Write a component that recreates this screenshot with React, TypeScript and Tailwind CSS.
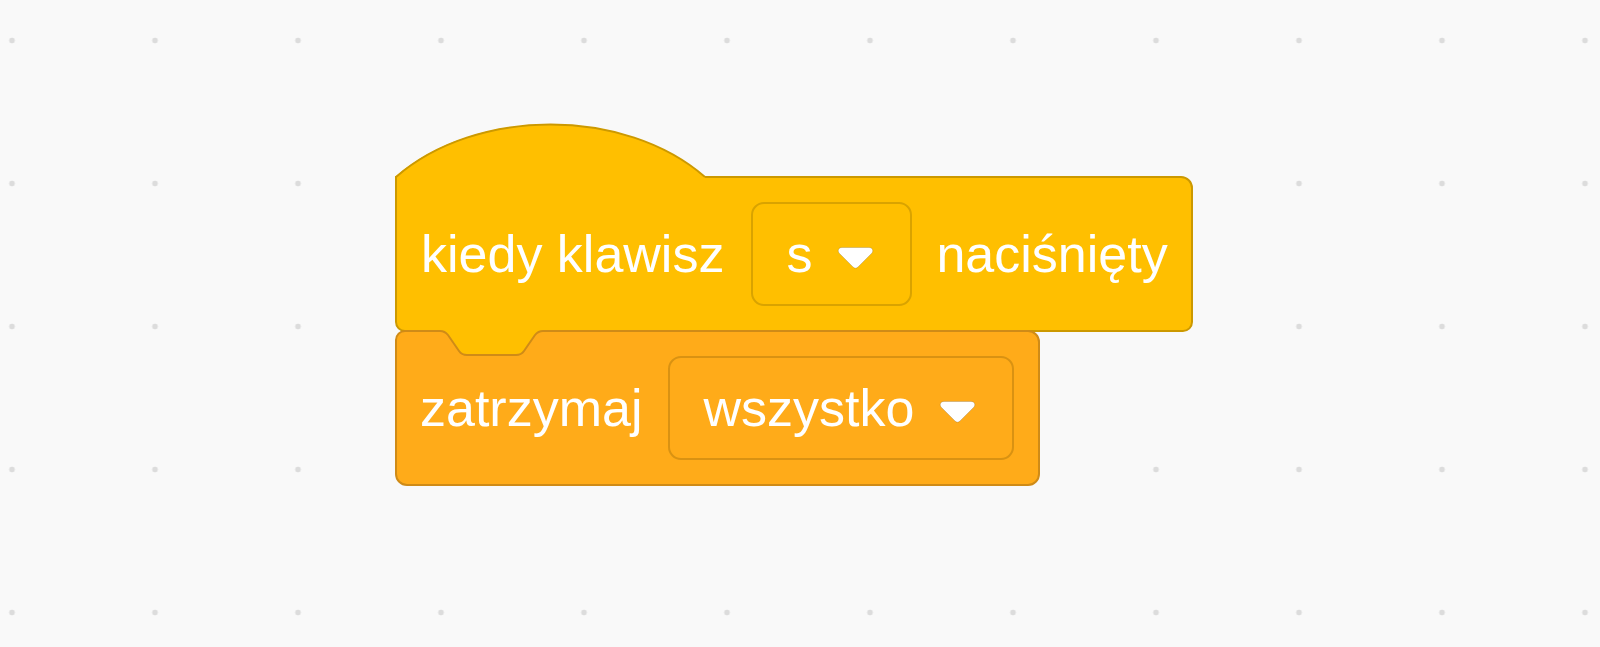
const HAT = "#FFBF00";
const HAT_EDGE = "#CC9900";
const CONTROL = "#FFAB19";
const CONTROL_EDGE = "#CF8B17";

function DropArrow() {
  return (
    <svg width="37" height="24" viewBox="0 0 37 24" className="mt-[7px] shrink-0">
      <path
        d="M5,1.5 H32 C35.5,1.5 37,5 34.5,7.5 L21,21 C19.5,22.5 17.5,22.5 16,21 L2.5,7.5 C0,5 1.5,1.5 5,1.5 Z"
        fill="#ffffff"
        stroke="rgba(0,0,0,0.15)"
        strokeWidth="1"
      />
    </svg>
  );
}

function Dropdown({ value, tone }: { value: string; tone: "hat" | "control" }) {
  const edge = tone === "hat" ? "border-[#d9a300]" : "border-[#d99212]";
  return (
    <div
      className={`flex h-[104px] items-center gap-[25px] rounded-[13px] border-2 pl-[33px] pr-[36px] ${edge}`}
    >
      <span>{value}</span>
      <DropArrow />
    </div>
  );
}

// "when key pressed" hat: rounded cap on top of a regular body
function HatBlock() {
  return (
    <div className="flex flex-col">
      <svg width="312" height="56" viewBox="0 0 312 56" className="relative z-10 -mb-[3px]">
        <path d="M0,56 V54 C80,-16 230,-16 310,54 V56 Z" fill={HAT} />
        <path d="M1,56 V54 C81,-16 230,-16 310,54" fill="none" stroke={HAT_EDGE} strokeWidth="2" />
      </svg>
      <div
        className="flex h-[156px] w-fit items-center rounded-tr-[12px] rounded-b-[10px] border-2 pl-[24px] pr-[23px]"
        style={{ backgroundColor: HAT, borderColor: HAT_EDGE }}
      >
        <span>kiedy klawisz</span>
        <div className="ml-[27px] mr-[24px]">
          <Dropdown value="s" tone="hat" />
        </div>
        <span>naciśnięty</span>
      </div>
    </div>
  );
}

// stack block with the notch the hat's tab drops into
function StopBlock() {
  return (
    <div
      className="relative -mt-[2px] flex h-[156px] w-fit items-center gap-[26px] rounded-tl-[10px] rounded-tr-[12px] rounded-b-[12px] border-2 pl-[23px] pr-[24px]"
      style={{ backgroundColor: CONTROL, borderColor: CONTROL_EDGE }}
    >
      <svg width="108" height="31" viewBox="0 0 108 31" className="absolute -top-[6px] left-[41px]">
        <path
          d="M0,5 H2 C6,5 8,6.5 10,9 L21,25 C23,28 25,29 29,29 H78 C82,29 84,28 86,25 L97,9 C99,6.5 101,5 105,5 H108 V0 H0 Z"
          fill={HAT}
        />
        <path
          d="M0,5 H2 C6,5 8,6.5 10,9 L21,25 C23,28 25,29 29,29 H78 C82,29 84,28 86,25 L97,9 C99,6.5 101,5 105,5 H108"
          fill="none"
          stroke={CONTROL_EDGE}
          strokeWidth="2"
        />
      </svg>
      <span>zatrzymaj</span>
      <Dropdown value="wszystko" tone="control" />
    </div>
  );
}

export default function App() {
  return (
    <div className="h-screen w-full overflow-hidden bg-[#f9f9f9] bg-[radial-gradient(circle,#dcdcdc_2.6px,transparent_3.2px)] bg-[length:143px_143px] bg-[position:-59.5px_-31px] font-['Liberation_Sans',Arial,sans-serif] text-[52px] leading-normal text-white">
      <div className="flex flex-col pl-[395px] pt-[123px]">
        <HatBlock />
        <StopBlock />
      </div>
    </div>
  );
}
